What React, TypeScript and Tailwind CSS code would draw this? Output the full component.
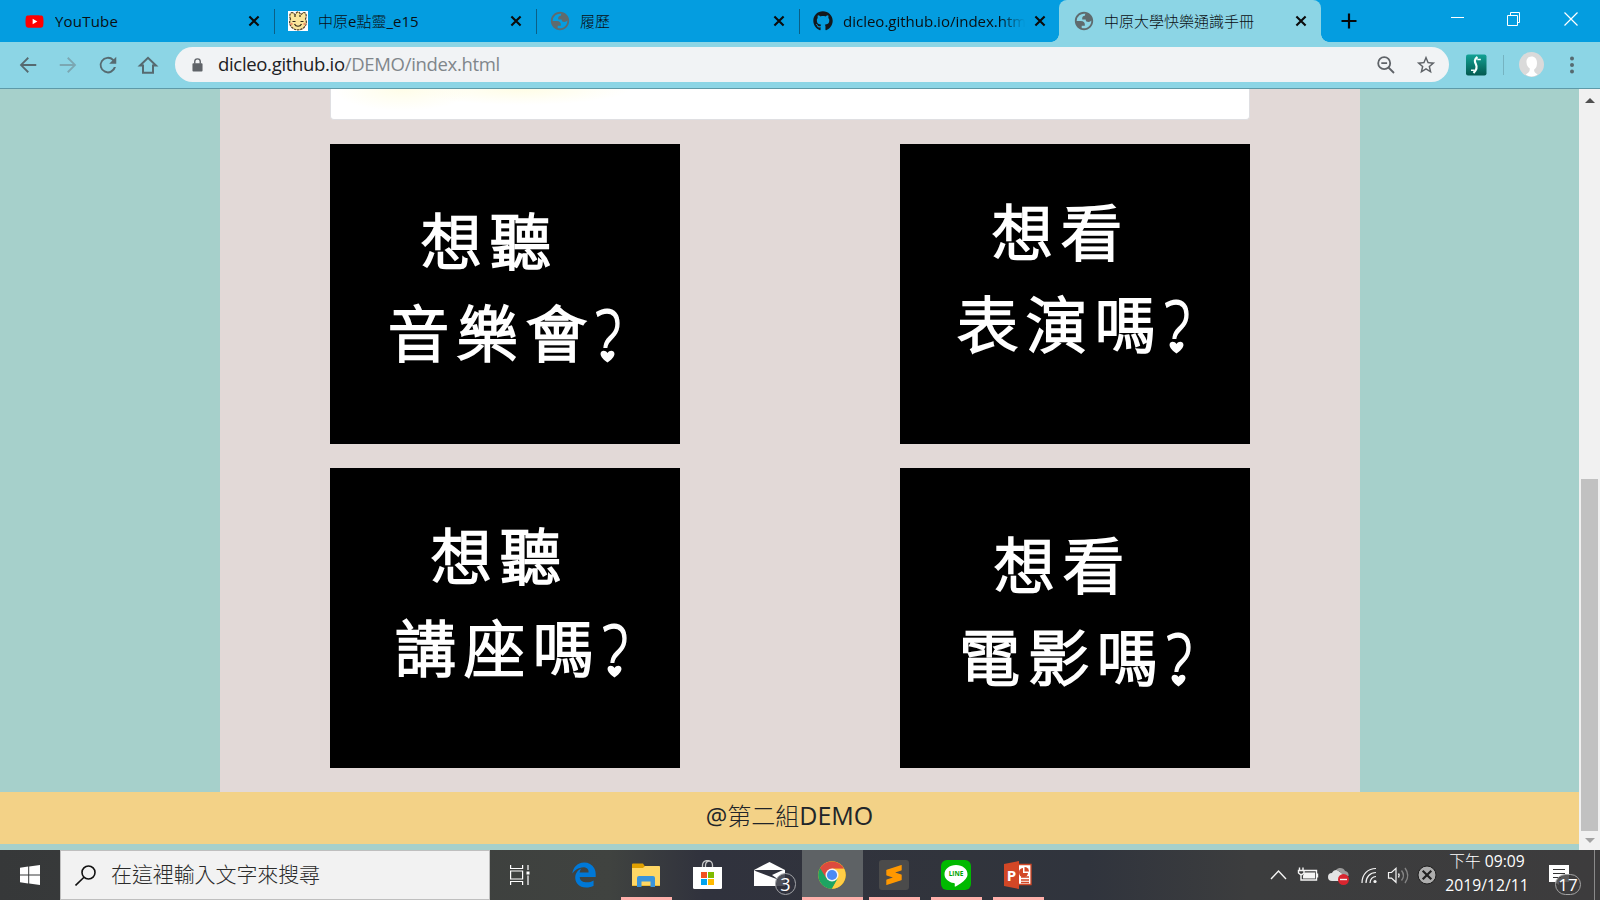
import type { ReactNode } from "react";
import { FaGithub, FaYoutube, FaEdgeLegacy } from "react-icons/fa6";
import { SiSublimetext } from "react-icons/si";

const CloseMark = () => (
  <svg viewBox="0 0 16 16" className="h-4 w-4 shrink-0">
    <path d="M3.4 3.4l9.2 9.2M12.6 3.4l-9.2 9.2" stroke="#0b0b0b" strokeWidth="2.1" fill="none" />
  </svg>
);

const Globe = () => (
  <svg viewBox="0 0 24 24" className="h-[22px] w-[22px] shrink-0 fill-[#5f6b6e]">
    <path fillRule="evenodd" d="M12 2C6.48 2 2 6.48 2 12s4.48 10 10 10 10-4.48 10-10S17.52 2 12 2zM4 12h4.400c3.407.022 4.922 1.730 4.543 5.127H9.488v2.470a8.004 8.004 0 0 0 10.498-8.083C19.327 12.504 18.332 13 17 13c-2.137 0-3.206-.916-3.206-2.750h-3.748c-.274-2.728.683-4.092 2.870-4.092 0-.975.327-1.597.811-1.970A8.004 8.004 0 0 0 4 12z" />
  </svg>
);

const Mascot = () => (
  <svg viewBox="0 0 20 20" className="h-5 w-5 shrink-0">
    <rect width="20" height="20" fill="#fff" />
    <path d="M2.500 8C1 5 2 1.500 4 1.500S6 3.500 7 3.500 8 .800 10 .800s2 2.700 3 2.700 1-2 3-2S19 5 17.500 8c1.500 3 1 6-1.500 8.500-3.500 3.200-8.500 3.200-12 0C1.500 14 1 11 2.500 8z" fill="#fbe79b" stroke="#4d3d22" strokeWidth="1.200" strokeDasharray="2.500 .7" />
    <path d="M4.500 10.500h3M12.500 10.500h3M6.500 13c1.500 3 5.500 3 7 0M7 4v2M12 4v2" stroke="#2e2618" strokeWidth="1.200" fill="none" />
    <circle cx="3.500" cy="13" r="1.200" fill="#f0936c" />
    <circle cx="16.500" cy="13" r="1.200" fill="#f0936c" />
  </svg>
);

function Tab({ icon, className, title, children }: { icon: ReactNode; className: string; title: string; children?: ReactNode }) {
  return (
    <div className={`relative flex h-[42px] shrink-0 items-center ${className}`}>
      <span className="flex w-5 shrink-0 justify-center">{icon}</span>
      <span className={title}>{children}</span>
      <CloseMark />
    </div>
  );
}

const Separator = () => <i className="absolute right-0 top-[9px] h-[25px] w-px bg-[#0b5f86]" />;

const tabText = "ml-[10px] min-w-0 flex-1 overflow-hidden whitespace-nowrap text-[15px] leading-5 text-[#0a0f12]";

function TabStrip() {
  return (
    <div className="flex h-[42px] bg-[#049de0]">
      <Tab
        className="w-[275px] pl-[25px] pr-[13px]"
        title={tabText}
        icon={<FaYoutube className="-ml-[1px] h-[21px] w-[19px] bg-[linear-gradient(#fff,#fff)] bg-[length:8px_8px] bg-center bg-no-repeat text-[#f00]" />}
      >
        <span className="tracking-[0.2px]">YouTube</span>
        <Separator />
      </Tab>
      <Tab className="w-[262px] pl-[13px] pr-[13px]" title={tabText} icon={<Mascot />}>
        中原e點靈_e15
        <Separator />
      </Tab>
      <Tab className="w-[263px] pl-[13px] pr-[13px]" title={tabText} icon={<Globe />}>
        履歷
        <Separator />
      </Tab>
      <Tab className="w-[259px] pl-[13px] pr-[11px]" title={`${tabText} mr-[7px] [mask-image:linear-gradient(to_right,black_86%,transparent)]`} icon={<FaGithub className="h-5 w-5 text-[#14181c]" />}>
        dicleo.github.io/index.html
      </Tab>
      <div className="relative h-[42px] w-[262px] shrink-0 rounded-t-lg bg-[#8cd5e5]">
        <i className="absolute -left-2 bottom-0 h-2 w-2 bg-[radial-gradient(circle_at_0_0,transparent_7.500px,#8cd5e5_8px)]" />
        <i className="absolute -right-2 bottom-0 h-2 w-2 bg-[radial-gradient(circle_at_100%_0,transparent_7.500px,#8cd5e5_8px)]" />
        <Tab className="w-[262px] pl-[15px] pr-[12px]" title={tabText} icon={<Globe />}>
          中原大學快樂通識手冊
        </Tab>
      </div>
      <svg viewBox="0 0 16 16" className="ml-5 mt-[13px] h-4 w-4">
        <path d="M8 .500v15M.500 8h15" stroke="#06090b" strokeWidth="2.200" />
      </svg>
      <svg viewBox="0 0 128 14" className="ml-[93px] mt-3 h-[14px] w-32" fill="none" stroke="#fff" strokeWidth="1">
        <path d="M1 5.500h13" />
        <path d="M57.500 3.500h10v10h-10zM60.500 3.500v-3h9v10h-2" />
        <path d="M114.500 .500l13 13M127.500 .500l-13 13" strokeWidth="1.200" />
      </svg>
    </div>
  );
}

function Toolbar() {
  return (
    <div className="flex h-[47px] items-center border-b border-[#5e9aa8] bg-[#8cd5e5] pb-px">
      <div className="flex w-[175px] shrink-0 items-center gap-[18px] pl-[16.5px]">
        <svg viewBox="0 0 24 24" className="h-[22px] w-[22px]" fill="#566a70">
          <path d="M21 11H6.800l6.200-6.200L11.600 3.400 3 12l8.600 8.600 1.400-1.400L6.800 13H21z" />
        </svg>
        <svg viewBox="0 0 24 24" className="h-[22px] w-[22px]" fill="#7ba7b2">
          <path d="M3 11h14.200L11 4.800l1.400-1.400L21 12l-8.600 8.600-1.400-1.400 6.200-6.200H3z" />
        </svg>
        <svg viewBox="0 0 24 24" className="h-[24px] w-[22px] overflow-visible" fill="#566a70">
          <path d="M18.300 5.700A9 9 0 1 0 20.700 14.300h-2.300A6.900 6.900 0 1 1 16.800 7.200L13.300 10.700H21V3z" />
        </svg>
        <svg viewBox="0 0 22 22" className="h-[22px] w-[22px]" fill="none" stroke="#566a70" strokeWidth="2">
          <path d="M3 11.500h3v7.300h10v-7.300h3L11 3.800z" />
        </svg>
      </div>
      <div className="flex h-[35px] w-[1274px] items-center rounded-full bg-[#f1f3f5] pl-[17px] pr-[12px]">
        <svg viewBox="0 0 12 16" className="h-4 w-[11px]">
          <rect x=".500" y="6" width="11" height="9" rx="1" fill="#5f6368" />
          <path d="M3 6.500V4.300a3 3 0 0 1 6 0v2.200" fill="none" stroke="#5f6368" strokeWidth="1.500" />
        </svg>
        <span className="-mt-px ml-[15px] flex-1 whitespace-nowrap text-[18.5px] leading-6 tracking-[-0.32px] text-[#202124]">
          dicleo.github.io<span className="text-[#80868b]">/DEMO/index.html</span>
        </span>
        <svg viewBox="0 0 18 18" className="h-[18px] w-[18px]" fill="none" stroke="#5f6368" strokeWidth="1.800">
          <circle cx="7.200" cy="7.200" r="6" />
          <path d="M11.500 11.500l5.500 5.500M4.300 7.200h5.800" />
        </svg>
        <svg viewBox="0 0 24 24" className="ml-[20px] h-[22px] w-[22px]" fill="#5f6368">
          <path d="M22 9.240l-7.190-.620L12 2 9.190 8.630 2 9.240l5.460 4.730L5.820 21 12 17.270 18.180 21l-1.630-7.030L22 9.240zM12 15.400l-3.760 2.270 1-4.280-3.320-2.880 4.380-.380L12 6.100l1.710 4.040 4.380.380-3.320 2.880 1 4.280L12 15.400z" />
        </svg>
      </div>
      <svg viewBox="0 0 22 22" className="ml-4 h-[22px] w-[22px]">
        <defs>
          <linearGradient id="ext" x2="0" y2="1"><stop stopColor="#12a295" /><stop offset="1" stopColor="#03594f" /></linearGradient>
        </defs>
        <rect x="1" y=".500" width="20.500" height="21" rx="2" fill="url(#ext)" />
        <path d="M12.500 3c-3.500 2.500-3 4.500-1.500 7.500s.5 5.500-2.500 8.500" stroke="#f4fffd" strokeWidth="2.200" fill="none" />
        <path d="M15.800 5.500h-3.500M9.500 16.300H6" stroke="#f4fffd" strokeWidth="1.500" fill="none" />
      </svg>
      <i className="ml-4 h-5 w-px bg-[#75b3c1]" />
      <svg viewBox="0 0 25 25" className="ml-[15px] h-[25px] w-[25px]">
        <circle cx="12.500" cy="12.500" r="12.500" fill="#dadada" />
        <path d="M12.500 4.500c-3.800 0-5.200 3-5 6 .2 3.300 1.700 5 3.200 5.700V18c0 2-2 3-4 4.500 3.500 2.500 8 2.500 12 0-2-1.500-4-2.500-3.500-5 2-1.300 2.800-3.500 2.800-6.500 0-4-2-6.500-5.500-6.500z" fill="#fff" />
      </svg>
      <svg viewBox="0 0 4 18" className="ml-[26px] h-[18px] w-[4px]" fill="#566a70">
        <circle cx="2" cy="2.500" r="2" /><circle cx="2" cy="9" r="2" /><circle cx="2" cy="15.500" r="2" />
      </svg>
    </div>
  );
}

function Poster({ className, first, second, secondClass }: { className: string; first: string; second: string; secondClass: string }) {
  return (
    <div className={`h-[300px] w-[350px] bg-black text-[61px] font-light leading-[92px] tracking-[8px] text-white [-webkit-text-stroke:2.5px_white] [stroke-linejoin:round] ${className}`}>
      <div className="whitespace-nowrap">{first}</div>
      <div className={`flex whitespace-nowrap ${secondClass}`}>
        {second}
        <span className="relative">
          <span className="inline-block translate-y-[3px] scale-y-[1.3] text-[62px] tracking-normal [-webkit-text-stroke:1.2px_white]">?</span>
          <span className="absolute left-[2px] top-[60px] h-[24px] w-[24px] bg-black">
            <svg viewBox="0 0 16 14" className="ml-[3px] mt-[2px] h-[13px] w-[15px]" fill="#fff">
              <path d="M8 13.500C4 10.500.500 7.500.500 4c0-4 5.500-4.500 7.500-.800C10-.500 15.500 0 15.500 4c0 3.500-3.500 6.500-7.500 9.500z" />
            </svg>
          </span>
        </span>
      </div>
    </div>
  );
}

function Page() {
  return (
    <div className="flex h-[761px]">
      <div className="w-[1579px] bg-[#a6d0cb]">
        <div className="ml-[220px] h-[703px] w-[1140px] bg-[#e2d9d7] px-[110px]">
          <div className="h-[31px] rounded-b border border-t-0 border-[#dfdfe2] bg-white bg-[radial-gradient(ellipse_70px_22px_at_72px_0,#fffde8,transparent),radial-gradient(ellipse_110px_16px_at_190px_0,#fffde6,transparent)]" />
          <div className="mt-[24px] grid grid-cols-[350px_350px] justify-between gap-y-6">
            <Poster className="pl-[91px] pt-[52px]" first="想聽" second="音樂會" secondClass="-ml-[33px]" />
            <Poster className="pl-[92px] pt-[43px]" first="想看" second="表演嗎" secondClass="-ml-[35px]" />
            <Poster className="pl-[101px] pt-[43px]" first="想聽" second="講座嗎" secondClass="-ml-[36px]" />
            <Poster className="pl-[94px] pt-[52px]" first="想看" second="電影嗎" secondClass="-ml-[35px]" />
          </div>
        </div>
        <div className="flex h-[52px] items-center justify-center bg-[#f3d287] pb-[5px] text-[24px] leading-none text-[#212529]">
          <span>@第二組<span className="text-[25px]">DEMO</span></span>
        </div>
      </div>
      <div className="flex w-[21px] flex-col items-center bg-[#f1f1f1]">
        <svg viewBox="0 0 10 5" className="mt-[9px] h-[5px] w-[10px] shrink-0" fill="#505050"><path d="M0 5l5-5 5 5z" /></svg>
        <i className="mt-[376px] h-[352px] w-[17px] shrink-0 bg-[#c1c1c1]" />
        <svg viewBox="0 0 10 5" className="mt-[7px] h-[5px] w-[10px] shrink-0" fill="#a3a3a3"><path d="M0 0l5 5 5-5z" /></svg>
      </div>
    </div>
  );
}

function TaskButton({ className, bar, children }: { className: string; bar?: string; children: ReactNode }) {
  return (
    <div className={`relative flex h-[50px] shrink-0 items-center justify-center ${className}`}>
      {children}
      {bar && <i className={`absolute bottom-0 h-[3px] bg-[#ffb0ab] ${bar}`} />}
    </div>
  );
}

function Taskbar() {
  return (
    <div className="flex h-[50px] bg-[linear-gradient(to_right,#363839_0,#404340_38%,#30323d_44%,#31343c_60%,#30343d_68%,#3c3d3e_78%,#3d3c3d_100%)]">
      <div className="flex w-[60px] shrink-0 items-center justify-center">
        <svg viewBox="0 0 20 20" className="h-5 w-5" fill="#fff">
          <path d="M0 2.800L8.200 1.600V9.500H0zM9.200 1.500L20 0v9.500H9.200zM0 10.500h8.200v8L0 17.300zM9.200 10.500H20V20L9.200 18.500z" />
        </svg>
      </div>
      <div className="flex w-[430px] shrink-0 items-center border border-[#bfbfbf] bg-[#f2f2f2] pl-[14px] text-[21px] text-[#2b2b2b]">
        <svg viewBox="0 0 21 21" className="h-[21px] w-[21px]" fill="none" stroke="#111" strokeWidth="1.600">
          <circle cx="13.500" cy="7.500" r="6.500" /><path d="M9 12.200L.500 20.500" />
        </svg>
        <span className="ml-[15px] whitespace-nowrap font-light tracking-[-0.1px]">在這裡輸入文字來搜尋</span>
      </div>
      <TaskButton className="w-[61px] pr-[2px]">
        <svg viewBox="0 0 20 20" className="h-5 w-5" fill="none" stroke="#fff" strokeWidth="1.200">
          <path d="M.600 0v3.500h12V0M.600 20v-3.500h12V20M.600 6h12v8H.600zM18 0v5M18 10.500V20" />
          <path d="M16.500 6.500h3v3h-3z" fill="#fff" stroke="none" />
        </svg>
      </TaskButton>
      <TaskButton className="w-[65px]"><FaEdgeLegacy className="h-[28px] w-[26px] text-[#0078d7]" /></TaskButton>
      <TaskButton className="w-[61px] pr-[2px]" bar="left-[5px] w-[51px]">
        <svg viewBox="0 0 28 24" className="mb-[1px] h-6 w-7">
          <path d="M0 1.500Q0 .500 1 .500h10l2 3H27q1 0 1 1V23H0z" fill="#e0a000" />
          <path d="M0 5h11l2-2h14q1 0 1 1v18.500H0z" fill="#ffd765" />
          <path d="M5 24v-9q0-2 2-2h14q2 0 2 2v9h-4.500v-5.500h-9V24z" fill="#3a94db" />
        </svg>
      </TaskButton>
      <TaskButton className="w-[62px] pr-[2px]">
        <svg viewBox="0 0 29 29" className="mb-[1px] h-[29px] w-[29px]">
          <path d="M9.500 8V5a5 4.500 0 0 1 10 0v3M12.500 8V5a3.500 4 0 0 1 5-3.500" fill="none" stroke="#c8c8c8" strokeWidth="1.300" />
          <path d="M0 7h29v20.500q0 1.500-1.500 1.500h-26Q0 29 0 27.500z" fill="#fff" />
          <path d="M8 12h6v6H8z" fill="#f25022" /><path d="M15 12h6v6h-6z" fill="#7fba00" />
          <path d="M8 19h6v6H8z" fill="#00a4ef" /><path d="M15 19h6v6h-6z" fill="#ffb900" />
        </svg>
      </TaskButton>
      <TaskButton className="w-[63px] pr-[2px]">
        <svg viewBox="0 0 31 24" className="mb-[2px] h-6 w-[31px]">
          <path d="M0 8L15.500 0 31 8v16H0z" fill="#fff" />
          <path d="M2 8h27L18 13l7 5L0 8.500z" fill="#30323d" />
        </svg>
        <span className="absolute left-[36px] top-[23px] flex h-[22px] w-[21px] items-center justify-center rounded-full border border-[#a5a6aa] bg-[#30323d]/85 text-[18px] leading-none text-white">3</span>
      </TaskButton>
      <TaskButton className="w-[61px] bg-[#5e6265] pr-[1px]" bar="left-0 w-[61px]">
        <svg viewBox="0 0 28 28" className="h-7 w-7">
          <circle cx="14" cy="14" r="13.800" fill="#fbc116" />
          <path d="M14 14L2.050 7.100A13.800 13.800 0 0 0 14 27.800L20 17.500z" fill="#1da462" />
          <path d="M14 14L2.050 7.100A13.800 13.800 0 0 1 25.950 7.700H14z" fill="#dd4b3e" />
          <path d="M14 7.700h11.950A13.800 13.800 0 0 1 14 27.800l5.500-9.800z" fill="#ffcd46" />
          <path d="M2.050 7.100l6.500 10.300L12 9z" fill="#dd4b3e" />
          <circle cx="14" cy="14" r="6.500" fill="#f4f4f4" /><circle cx="14" cy="14" r="5.100" fill="#4a8af4" />
        </svg>
      </TaskButton>
      <TaskButton className="w-[63px] pr-[2px]" bar="left-[6px] w-[51px]">
        <span className="flex h-[30px] w-[30px] items-center justify-center rounded-[3px] bg-[#4b4b4b]"><SiSublimetext className="h-[20px] w-[20px] text-[#ff9800]" /></span>
      </TaskButton>
      <TaskButton className="w-[61px] pr-[1px]" bar="left-[5px] w-[51px]">
        <span className="relative flex h-[30px] w-[30px] items-center justify-center rounded-[6px] bg-[#00b900]">
          <svg viewBox="0 0 24 24" className="mt-[2px] h-6 w-6" fill="#fff"><path d="M12 1C5.500 1 .500 5 .500 10.200c0 4.500 4 8 9.300 8.900 1.200.2 1.200.8.900 2.900-.1.600.3.700 1 .4 3-1.600 7.500-4.700 9.900-7.500 1.300-1.500 1.900-3 1.900-4.700C23.500 5 18.500 1 12 1z" /></svg>
          <b className="absolute left-0 top-[9px] w-[30px] text-center text-[6.500px] leading-[10px] text-[#00a400]">LINE</b>
        </span>
      </TaskButton>
      <TaskButton className="w-[63px] pr-[1px]" bar="left-[6px] w-[51px]">
        <span className="relative flex h-7 w-7">
          <svg viewBox="0 0 28 28" className="h-7 w-7">
            <path d="M14 3.500h13v20H14z" fill="#fff" stroke="#d24726" strokeWidth="1.300" />
            <path d="M17 16h8M17 19h8M17 21.500h8" stroke="#d24726" strokeWidth="1.300" />
            <path d="M19 7v5h5a4.500 4.500 0 1 1-5-5z" fill="#d24726" /><path d="M20.500 6v4.500H25A4.500 4.500 0 0 0 20.500 6z" fill="#d24726" />
            <path d="M0 3l15-3v28L0 25z" fill="#d24726" />
          </svg>
          <b className="absolute left-0 top-[4px] w-[15px] text-center text-[15px] leading-5 text-white">P</b>
        </span>
      </TaskButton>
      <div className="ml-[220px] flex items-center">
        <svg viewBox="0 0 150 26" className="h-[26px] w-[150px]" fill="none" stroke="#f5f5f5" strokeWidth="1.400">
          <path d="M1 17l7.500-8 7.500 8" />
          <path d="M33 8.500h13.500v9.500H31v-5M47.500 11.500v4M29.500 5.500v3M33 5.500v3M28.500 8.500h5.500v2.500l-2 1.500h-1.500l-2-1.500z" />
          <path d="M34.500 10.500h10.500v6H33v-3z" fill="#f5f5f5" stroke="none" />
          <path d="M62 19a4 4 0 0 1 0-8 5 5 0 0 1 5-3l9 6v5z" fill="#e3e3e3" stroke="none" />
          <path d="M66 8c3-3.500 8-2 9 1 3 .500 4 3 3.500 5l-6 0c0-3-3-5-6.500-6z" fill="#9b9b9b" stroke="none" />
          <circle cx="73.500" cy="17.500" r="5.500" fill="#d9252f" stroke="none" /><path d="M70 17.500h7" />
          <path d="M92 21c0-9 6-14.500 14-14.500M96 21c0-6 4-10.500 10-10.500M100 21c0-3.500 2.500-6.500 6-6.500" strokeWidth="1.200" />
          <circle cx="105" cy="19.500" r="1.600" fill="#f5f5f5" stroke="none" />
          <path d="M118.500 10.500h3l4.500-4.200v14l-4.500-4.200h-3z" strokeWidth="1.200" /><path d="M128.500 11.500q1.500 2 0 4" />
          <path d="M131.500 8.500q4 5 0 10M135 6q5.500 7.500 0 15" stroke="#858585" />
        </svg>
        <svg viewBox="0 0 20 20" className="-ml-[3px] h-5 w-5"><circle cx="10" cy="10" r="9" fill="#adadad" stroke="#1f1f1f" /><path d="M5.700 5.700l8.600 8.600M14.300 5.700l-8.600 8.600" stroke="#222" strokeWidth="2.200" /></svg>
      </div>
      <div className="ml-[6px] flex w-[88px] flex-col items-center whitespace-nowrap text-[15.700px] leading-[23.500px] text-white">
        <span>下午 09:09</span><span>2019/12/11</span>
      </div>
      <div className="relative ml-[18px] w-[46px] border-r border-[#8a8a8a]">
        <svg viewBox="0 0 20 20" className="mt-[15px] h-5 w-5"><path d="M0 0h20v17H10v3l-4-3H0z" fill="#fff" /><path d="M4 4.500h12M4 8.500h12M4 12.500h8" stroke="#333" strokeWidth="1.200" /></svg>
        <span className="absolute left-[6px] top-[24px] flex h-[21px] w-[26px] items-center justify-center rounded-full border border-[#a5a5a5] bg-[#3d3c3d]/85 text-[17px] leading-none text-white">17</span>
      </div>
    </div>
  );
}

export default function App() {
  return (
    <div className="h-[900px] w-[1600px] overflow-hidden font-['Open_Sans','Noto_Sans_CJK_TC_Light','Noto_Sans_CJK_TC',sans-serif]">
      <TabStrip />
      <Toolbar />
      <Page />
      <Taskbar />
    </div>
  );
}
